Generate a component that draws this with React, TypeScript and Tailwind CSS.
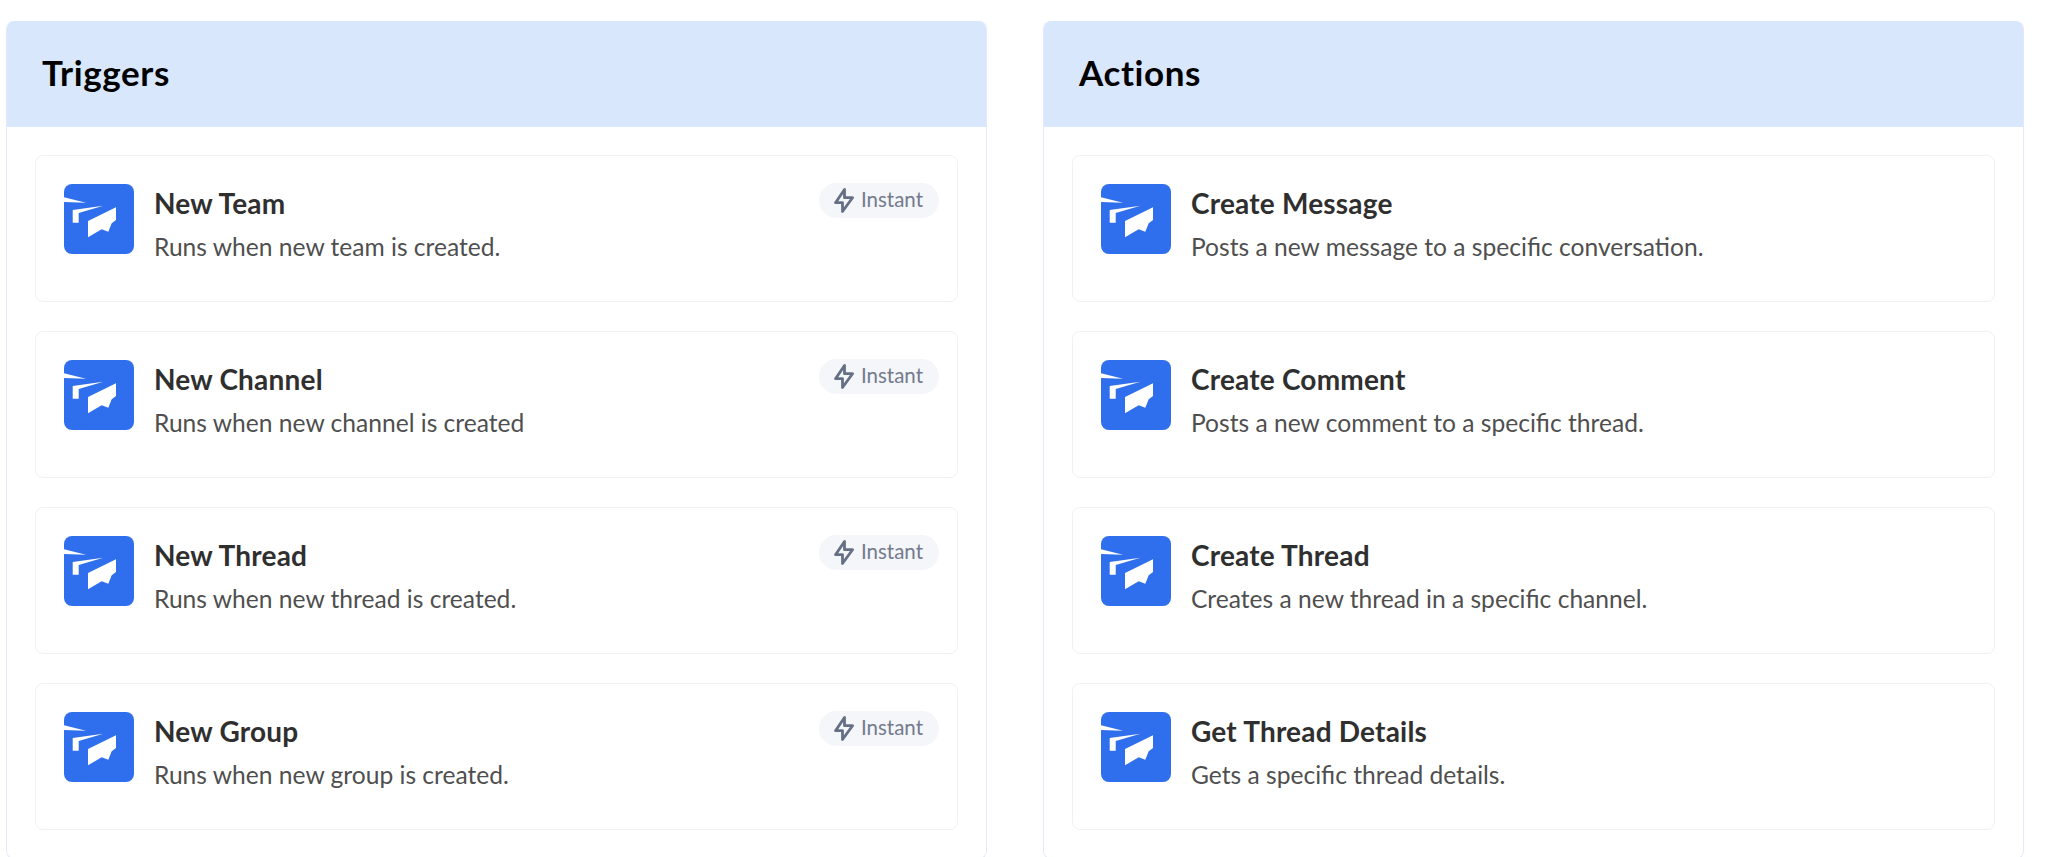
type Item = { title: string; description: string };

const triggers: Item[] = [
  { title: 'New Team', description: 'Runs when new team is created.' },
  { title: 'New Channel', description: 'Runs when new channel is created' },
  { title: 'New Thread', description: 'Runs when new thread is created.' },
  { title: 'New Group', description: 'Runs when new group is created.' },
];

const actions: Item[] = [
  { title: 'Create Message', description: 'Posts a new message to a specific conversation.' },
  { title: 'Create Comment', description: 'Posts a new comment to a specific thread.' },
  { title: 'Create Thread', description: 'Creates a new thread in a specific channel.' },
  { title: 'Get Thread Details', description: 'Gets a specific thread details.' },
];

function Logo() {
  return (
    <svg width="70" height="70" viewBox="0 0 70 70" className="shrink-0">
      <rect width="70" height="70" rx="8" fill="#2f6fed" />
      <path d="M0 13.3L22 18.7L0 18Z" fill="#fff" />
      <path d="M8.7 26L39.3 21.7L14.7 29V38.7H8.7Z" fill="#fff" />
      <path d="M24 37L52 23.3V36L47.7 39.3L44.3 47.7L37.7 45.3L24 53.3Z" fill="#fff" />
    </svg>
  );
}

function Badge({ show }: { show: boolean }) {
  if (!show) return null;
  return (
    <span className="-mt-[1px] flex h-[35px] items-center gap-[7px] rounded-full bg-[#f4f6fa] pl-[15px] pr-[16px]">
      <svg width="20" height="25" viewBox="0 0 20 25" fill="none" className="shrink-0">
        <path
          d="M10.5 1.5L1.5 14.7H8.5V23.5L18.5 9.7H10.5Z"
          stroke="#667085"
          strokeWidth="2.8"
          strokeLinejoin="round"
        />
      </svg>
      <span className="-mt-[2px] text-[20.5px] text-[#737b8c]">Instant</span>
    </span>
  );
}

function Card({ item, instant }: { item: Item; instant: boolean }) {
  return (
    <div className="flex h-[147px] gap-[20px] rounded-lg border border-[#f0f1f3] bg-white pt-[28px] pl-[28px] pr-[18px]">
      <Logo />
      <div className="flex-1">
        <h3 className="mt-[1px] text-[28px] leading-[36px] font-bold tracking-[0.2px] text-[#2f2f2f]">{item.title}</h3>
        <p className="mt-[8px] text-[24.6px] leading-[36px] text-[#4f4f4f]">{item.description}</p>
      </div>
      <Badge show={instant} />
    </div>
  );
}

function Panel({ title, items, instant }: { title: string; items: Item[]; instant: boolean }) {
  return (
    <section className="h-[838px] flex-1 overflow-hidden rounded-lg border-x border-b border-[#e3e8fd]">
      <header className="flex h-[106px] items-center bg-[#d9e7fd] pl-[35px]">
        <h2 className="-mt-[4px] text-[35px] font-bold tracking-[0.6px] text-black">{title}</h2>
      </header>
      <div className="flex flex-col gap-[29px] pt-[28px] pl-[28px] pr-[28px]">
        {items.map((item) => (
          <Card key={item.title} item={item} instant={instant} />
        ))}
      </div>
    </section>
  );
}

export default function App() {
  return (
    <div className="h-[857px] overflow-hidden bg-white font-['Lato','Noto_Sans',sans-serif]">
      <div className="flex gap-[56px] pt-[21px] pl-[6px] pr-[24px]">
        <Panel title="Triggers" items={triggers} instant={true} />
        <Panel title="Actions" items={actions} instant={false} />
      </div>
    </div>
  );
}
